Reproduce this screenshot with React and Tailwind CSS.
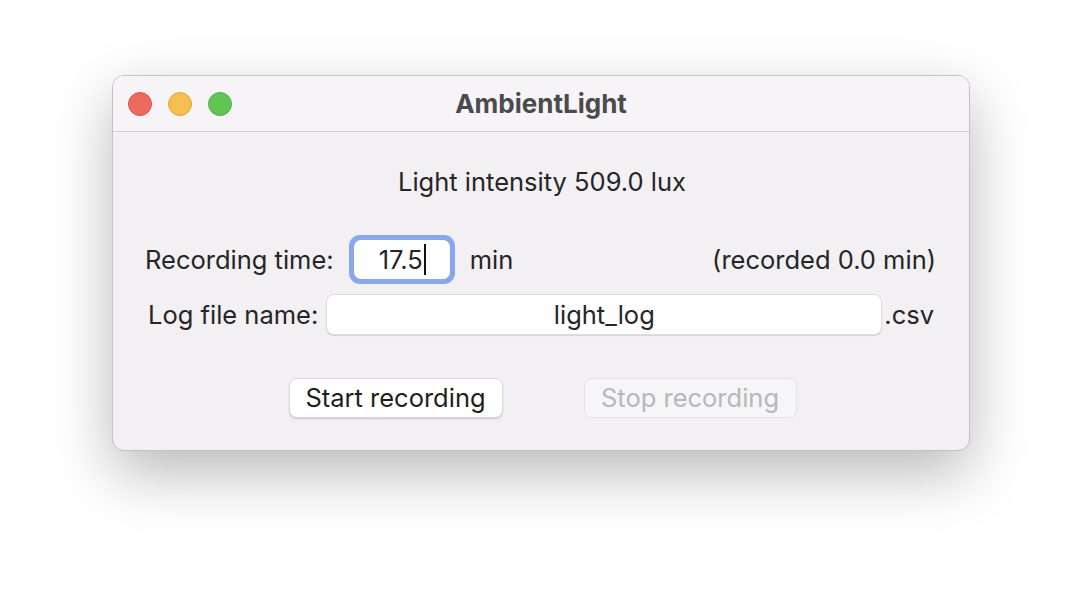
import React from 'react';

const font = { fontFamily: 'Inter, "Noto Sans", "Liberation Sans", sans-serif' };

function TrafficLights() {
  return (
    <div className="flex items-center gap-4">
      <span className="block h-6 w-6 rounded-full bg-[#ee6a5f] border border-[#d9544a]" />
      <span className="block h-6 w-6 rounded-full bg-[#f5bf4f] border border-[#dca63a]" />
      <span className="block h-6 w-6 rounded-full bg-[#61c554] border border-[#4fae43]" />
    </div>
  );
}

export default function App() {
  return (
    <div className="h-[598px] w-[1082px] bg-white pl-[112px] pt-[75px]" style={font}>
      <div className="w-[858px] h-[376px] rounded-[12px] border border-[#c3c1c5] bg-[#f2f0f3] overflow-hidden shadow-[0_22px_60px_rgba(0,0,0,0.28)] flex flex-col">
        {/* Title bar */}
        <div className="relative h-[56px] shrink-0 bg-[#f6f4f7] border-b border-[#d3d1d5] flex items-center px-[15px]">
          <TrafficLights />
          <div className="absolute inset-0 flex items-center justify-center text-[26px] font-bold text-[#4b4a4c] leading-[32px]">
            AmbientLight
          </div>
        </div>

        {/* Body */}
        <div className="flex flex-col pt-[34px] text-[25.5px] text-[#262527]">
          <div className="text-center leading-[32px] pl-[2px]">Light intensity 509.0 lux</div>

          <div className="flex items-center h-[49px] mt-[37px] pl-[32px] pr-[33px]">
            <span className="leading-[32px]">Recording time:</span>
            <div className="ml-[15px] w-[106px] h-[49px] rounded-[11px] bg-[#89a7ec] p-[5px]">
              <div className="h-full w-full rounded-[7px] bg-white flex items-center justify-center pl-[1px]">
                <span className="leading-[32px]">17.5</span>
                <span className="block w-[2px] h-[31px] bg-[#111] ml-[1px]" />
              </div>
            </div>
            <span className="ml-[15px] leading-[32px]">min</span>
            <span className="ml-auto leading-[32px]">(recorded 0.0 min)</span>
          </div>

          <div className="flex items-center h-[41px] mt-[10px] pl-[35px] pr-[35px]">
            <span className="leading-[32px]">Log file name:</span>
            <div className="ml-[8px] flex-1 h-[41px] rounded-[8px] bg-white border border-[#dedce0] shadow-[0_1px_1px_rgba(0,0,0,0.12)] flex items-center justify-center">
              <span className="leading-[32px]">light_log</span>
            </div>
            <span className="ml-[2px] leading-[32px]">.csv</span>
          </div>

          <div className="flex justify-center gap-[81px] mt-[43px] pl-[3px]">
            <button className="h-[40px] w-[214px] rounded-[8px] bg-white border border-[#dcdadd] shadow-[0_1px_1.5px_rgba(0,0,0,0.18)] text-[25.5px] text-[#1f1e20] leading-[32px]">
              Start recording
            </button>
            <button className="h-[40px] w-[213px] rounded-[8px] bg-[#f6f5f7] border border-[#e4e2e6] text-[25.5px] text-[#b8b7ba] leading-[32px]" disabled>
              Stop recording
            </button>
          </div>
        </div>
      </div>
    </div>
  );
}
